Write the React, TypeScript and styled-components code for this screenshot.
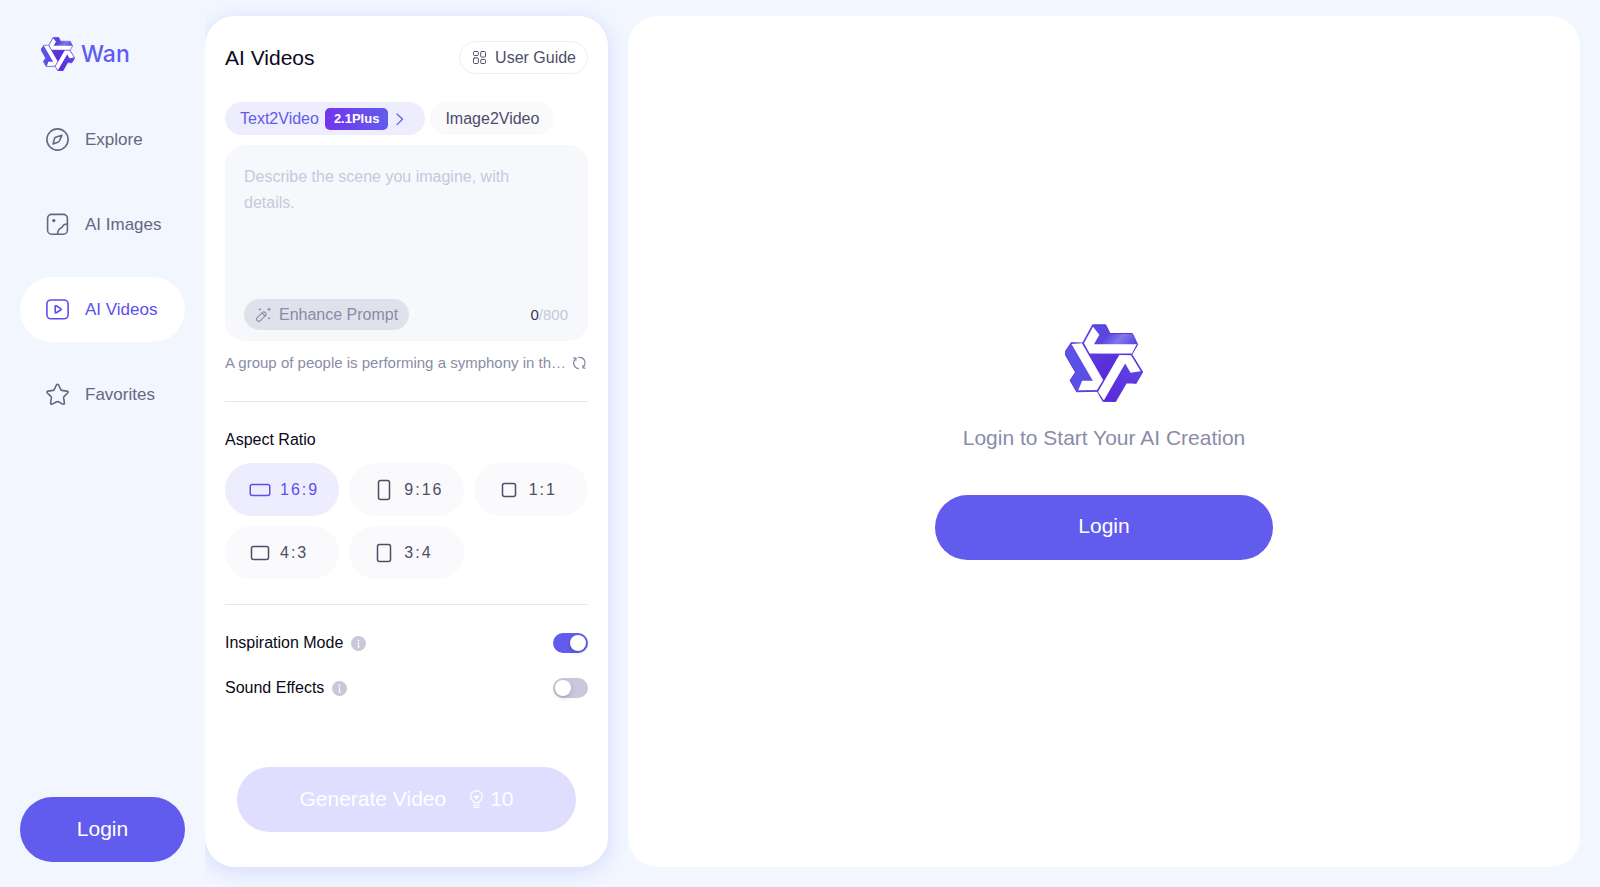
import React, { useState } from 'react';
import styled, { createGlobalStyle, css } from 'styled-components';

const color = {
  page: '#f1f6ff',
  brand: '#615ced',
  brandText: '#5b4ff0',
  brandSoft: '#eeedfe',
  brandDisabled: '#e0deff',
  ink: '#0b0820',
  text: '#4c4d68',
  nav: '#656682',
  muted: '#8a8ca8',
  faint: '#c8c8da',
  line: '#e6e6f2',
  field: '#f7f8fc',
  chip: '#fafafc',
};

const GlobalStyle = createGlobalStyle`
  *, *::before, *::after { box-sizing: border-box; }
  body {
    margin: 0;
    background: ${color.page};
    font-family: "Liberation Sans", Arial, sans-serif;
    color: ${color.ink};
  }
  button, textarea { font-family: inherit; }
`;

const Page = styled.div`
  display: flex;
  min-height: 100vh;
`;

const Sidebar = styled.aside`
  position: relative;
  z-index: 1;
  display: flex;
  flex-direction: column;
  flex: 0 0 205px;
  padding: 37px 20px 25px;
  background: ${color.page};
`;

const Brand = styled.a`
  display: flex;
  align-items: center;
  gap: 6px;
  height: 34px;
  padding-left: 21px;
  color: ${color.brand};
  font: 500 23px/34px Inter, sans-serif;
  text-decoration: none;
`;

const Nav = styled.nav`
  display: flex;
  flex-direction: column;
  gap: 20px;
  margin-top: 36px;
`;

const NavLink = styled.a<{ $active?: boolean }>`
  display: flex;
  align-items: center;
  gap: 16px;
  height: 65px;
  padding-left: 26px;
  border-radius: 33px;
  background: ${(p) => (p.$active ? '#fff' : 'transparent')};
  color: ${(p) => (p.$active ? color.brandText : color.nav)};
  font-size: 17px;
  text-decoration: none;
`;

const PrimaryButton = styled.button<{ $width?: string }>`
  display: flex;
  align-items: center;
  justify-content: center;
  width: ${(p) => p.$width ?? 'auto'};
  height: 65px;
  padding: 0 0 2px;
  border: 0;
  border-radius: 33px;
  background: ${color.brand};
  color: #fff;
  font-size: 21px;
  cursor: pointer;

  &:disabled {
    background: ${color.brandDisabled};
    cursor: default;
  }
`;

const SidebarFooter = styled.div`
  display: grid;
  margin-top: auto;
`;

const Content = styled.div`
  display: flex;
  flex: 1;
  gap: 20px;
  min-width: 0;
  padding: 16px 20px 20px 0;
`;

const Panel = styled.section`
  display: flex;
  flex-direction: column;
  flex: 0 0 403px;
  min-width: 0;
  padding: 25px 20px 35px;
  border-radius: 30px;
  background: #fff;
  box-shadow: 0 4px 20px rgba(97, 92, 237, 0.18);
`;

const PanelHeader = styled.header`
  display: flex;
  align-items: center;
  justify-content: space-between;
`;

const Title = styled.h1`
  margin: 0;
  font-size: 21px;
  font-weight: 400;
`;

const GuideLink = styled.a`
  display: flex;
  align-items: center;
  gap: 9px;
  height: 33px;
  padding: 0 11px 0 13px;
  border: 1px solid #ededf5;
  border-radius: 17px;
  color: ${color.text};
  font-size: 16px;
  text-decoration: none;
`;

const Tabs = styled.div`
  display: flex;
  gap: 5px;
  margin-top: 28px;
`;

const Tab = styled.button<{ $active?: boolean }>`
  display: flex;
  align-items: center;
  gap: 6px;
  height: 33px;
  padding: 0 15px;
  border: 0;
  border-radius: 17px;
  background: ${(p) => (p.$active ? color.brandSoft : color.chip)};
  color: ${(p) => (p.$active ? color.brand : color.text)};
  font-size: 16px;
  cursor: pointer;
`;

const VersionBadge = styled.span`
  height: 22px;
  padding: 0 9px;
  border-radius: 5px;
  background: linear-gradient(90deg, #7434ee, #615ced);
  color: #fff;
  font-size: 13px;
  font-weight: 700;
  line-height: 22px;
`;

const PromptBox = styled.div`
  display: flex;
  flex-direction: column;
  height: 196px;
  margin-top: 10px;
  padding: 19px 20px 11px 19px;
  border-radius: 20px;
  background: ${color.field};
`;

const PromptInput = styled.textarea`
  flex: 1;
  width: 100%;
  min-height: 0;
  padding: 0 20px 0 0;
  border: 0;
  outline: 0;
  resize: none;
  background: transparent;
  color: ${color.text};
  font-size: 16px;
  line-height: 26px;

  &::placeholder { color: ${color.faint}; opacity: 1; }
`;

const PromptFooter = styled.div`
  display: flex;
  align-items: center;
  justify-content: space-between;
`;

const EnhanceButton = styled.button`
  display: flex;
  align-items: center;
  gap: 7px;
  height: 31px;
  padding: 0 11px 0 12px;
  border: 0;
  border-radius: 16px;
  background: #dfe1eb;
  color: ${color.muted};
  font-size: 16px;
`;

const Counter = styled.span`
  color: ${color.faint};
  font-size: 15px;
`;

const CounterValue = styled.span`
  color: #35365a;
`;

const Suggestion = styled.div`
  display: flex;
  align-items: center;
  gap: 5px;
  margin-top: 12px;
  color: ${color.muted};
  font-size: 15px;
  line-height: 20px;
`;

const SuggestionText = styled.span`
  flex: 1;
  min-width: 0;
  overflow: hidden;
  text-overflow: ellipsis;
  white-space: nowrap;
`;

const IconButton = styled.button`
  display: flex;
  padding: 0;
  border: 0;
  background: none;
  color: inherit;
  cursor: pointer;
`;

const Divider = styled.hr<{ $space: number }>`
  width: 100%;
  height: 1px;
  margin: ${(p) => p.$space}px 0 28px;
  border: 0;
  background: ${color.line};
`;

const RatioGroup = styled.fieldset`
  min-width: 0;
  margin: 0;
  padding: 0;
  border: 0;
`;

const Legend = styled.legend`
  padding: 0;
  font-size: 16px;
  line-height: 20px;
`;

const RatioGrid = styled.div`
  display: grid;
  grid-template-columns: repeat(3, 1fr);
  gap: 10px;
  margin-top: 13px;
`;

const HiddenRadio = styled.input`
  position: absolute;
  opacity: 0;
  pointer-events: none;
`;

const RatioOption = styled.label<{ $active: boolean }>`
  display: flex;
  align-items: center;
  gap: 9px;
  height: 53px;
  padding-left: 24px;
  border-radius: 27px;
  background: ${(p) => (p.$active ? color.brandSoft : color.chip)};
  color: ${(p) => (p.$active ? color.brandText : color.text)};
  font-size: 16px;
  letter-spacing: 2px;
  cursor: pointer;
`;

const Settings = styled.div`
  display: grid;
  gap: 25px;
  margin-bottom: 20px;
`;

const SettingRow = styled.div`
  display: flex;
  align-items: center;
  height: 20px;
  font-size: 16px;
`;

const Info = styled.span`
  display: flex;
  margin: 0 auto 0 8px;
`;

const Switch = styled.input`
  appearance: none;
  display: flex;
  align-items: center;
  width: 35px;
  height: 20px;
  margin: 0;
  padding: 2px;
  border-radius: 10px;
  background: ${color.faint};
  cursor: pointer;

  &::before {
    content: '';
    width: 16px;
    height: 16px;
    border-radius: 50%;
    background: #fff;
    box-shadow: 0 2px 4px rgba(0, 35, 11, 0.2);
  }

  &:checked {
    justify-content: flex-end;
    background: ${color.brand};
  }
`;

const GenerateArea = styled.div`
  display: grid;
  margin-top: auto;
  padding: 0 12px;
`;

const Cost = styled.span`
  display: flex;
  align-items: center;
  gap: 6px;
  margin-left: 23px;
`;

const Workspace = styled.main`
  display: flex;
  flex: 1;
  flex-direction: column;
  align-items: center;
  justify-content: center;
  min-width: 0;
  border-radius: 30px;
  background: #fff;
`;

const Invitation = styled.p`
  margin: 23px 0 44px;
  color: ${color.muted};
  font-size: 21px;
  line-height: 26px;
`;

const iconBase = css`
  flex: none;
  fill: none;
  stroke: currentColor;
  stroke-linecap: round;
  stroke-linejoin: round;
`;

const Icon = styled.svg<{ $stroke?: number }>`
  ${iconBase}
  stroke-width: ${(p) => p.$stroke ?? 1.5};
`;

function Logo({ size, id }: { size: number; id: string }) {
  const arms = [
    { angle: 0, fill: `url(#${id}-top)` },
    { angle: 120, fill: `url(#${id}-right)` },
    { angle: 240, fill: `url(#${id}-left)` },
  ];
  return (
    <svg width={size} height={size} viewBox="0 0 234 233" aria-hidden="true">
      <defs>
        <linearGradient id={`${id}-top`} x1="0" y1="0" x2="1" y2="0.5">
          <stop offset="0.2" stopColor="#5a4be4" />
          <stop offset="0.5" stopColor="#5846dd" />
          <stop offset="0.74" stopColor="#8178ec" />
          <stop offset="1" stopColor="#5d49e4" />
        </linearGradient>
        <linearGradient id={`${id}-right`} x1="0" y1="0" x2="1" y2="0">
          <stop offset="0" stopColor="#5f48e4" />
          <stop offset="1" stopColor="#5a28da" />
        </linearGradient>
        <linearGradient id={`${id}-left`} x1="0" y1="1" x2="1" y2="0">
          <stop offset="0" stopColor="#5a48e2" />
          <stop offset="1" stopColor="#5c58e8" />
        </linearGradient>
        <linearGradient id={`${id}-core`} x1="0" y1="0" x2="0.6" y2="1">
          <stop offset="0" stopColor="#5a3fdc" />
          <stop offset="1" stopColor="#5a22d6" />
        </linearGradient>
      </defs>
      <path d="M70 86H170L115 180Z" fill={`url(#${id}-core)`} />
      {arms.map((arm) => (
        <path
          key={arm.angle}
          transform={`rotate(${arm.angle} 117 116)`}
          d="M53 57 83 2H122L135 28H202L218 61 201 90H73Z"
          fill={arm.fill}
          stroke="#5a35df"
          strokeWidth="3"
          strokeLinejoin="round"
        />
      ))}
      {arms.map((arm) => (
        <path
          key={arm.angle}
          transform={`rotate(${arm.angle} 117 116)`}
          d="M57 57 84 8 103 32 87 60H215L201 88H74Z"
          fill="#fff"
        />
      ))}
    </svg>
  );
}

const CompassIcon = () => (
  <Icon width="23" height="23" viewBox="0 0 23 23" $stroke={1.6}>
    <circle cx="11.5" cy="11.5" r="10.6" />
    <path d="M15.9 7.2 9.6 9.2Q8.9 9.5 8.6 10.1L7.1 15.9 12.4 13.9Q13.2 13.5 13.5 12.8Z" />
  </Icon>
);

const ImageIcon = () => (
  <Icon width="23" height="23" viewBox="0 0 23 23" $stroke={1.6}>
    <rect x="1.6" y="1.4" width="19.8" height="19.8" rx="4" />
    <circle cx="7.8" cy="7.6" r="0.9" fill="currentColor" />
    <path d="M11.6 21C11.6 17.4 12.8 15.6 16.2 14.2 16.8 12.2 18.4 11.2 21.2 11" />
  </Icon>
);

const VideoIcon = () => (
  <Icon width="23" height="23" viewBox="0 0 23 23" $stroke={1.6}>
    <rect x="0.9" y="2" width="21.2" height="18.8" rx="4" />
    <path d="M9.2 8.5Q9.2 7.4 10.2 7.8L14.7 10.6Q15.6 11.3 14.7 12L10.2 14.8Q9.2 15.2 9.2 14.2Z" />
  </Icon>
);

const StarIcon = () => (
  <Icon width="23" height="23" viewBox="0 0 23 23" $stroke={1.6}>
    <path d="M10.4 2Q11.5 0.4 12.6 2L14.8 6.6Q15.1 7.3 15.9 7.4L20.9 8.1Q22.8 8.6 21.6 10L18 13.6Q17.5 14.1 17.6 14.9L18.4 19.9Q18.5 21.8 16.8 21.1L12.3 18.7Q11.5 18.3 10.7 18.7L6.2 21.1Q4.5 21.8 4.6 19.9L5.4 14.9Q5.5 14.1 5 13.6L1.4 10Q0.2 8.6 2.1 8.1L7.1 7.4Q7.9 7.3 8.2 6.6Z" />
  </Icon>
);

const GridIcon = () => (
  <Icon width="13" height="13" viewBox="0 0 13 13" $stroke={1}>
    <rect x="0.5" y="0.5" width="4.8" height="4" rx="1" />
    <rect x="7.7" y="0.5" width="4.8" height="5.6" rx="1" />
    <rect x="0.5" y="6.9" width="4.8" height="5.6" rx="1" />
    <rect x="7.7" y="8.5" width="4.8" height="4" rx="1" />
  </Icon>
);

const ChevronIcon = () => (
  <Icon width="16" height="16" viewBox="0 0 16 16" $stroke={1.2}>
    <path d="M3 3 8.6 8.3 3 13.6" />
  </Icon>
);

const WandIcon = () => (
  <Icon width="16" height="16" viewBox="0 0 16 16" $stroke={1.1}>
    <rect x="-0.4" y="7.4" width="11.4" height="4.4" rx="2.2" transform="rotate(-45 5.3 9.6)" />
    <path d="M6.4 6.4 9 9" />
    <g fill="currentColor" stroke="none">
      <path d="M13 0 13.6 1.8 15.4 2.4 13.6 3 13 4.8 12.4 3 10.6 2.4 12.4 1.8Z" />
      <path d="M4 0.6 4.5 1.9 5.8 2.4 4.5 2.9 4 4.2 3.5 2.9 2.2 2.4 3.5 1.9Z" />
      <path d="M13 9.4 13.4 10.7 14.8 11.2 13.4 11.7 13 13 12.6 11.7 11.2 11.2 12.6 10.7Z" />
    </g>
  </Icon>
);

const RefreshIcon = () => (
  <Icon width="16" height="14" viewBox="0 0 16 14" $stroke={1.2}>
    <path d="M1.6 1.9 4 2.1 3.9 4.3" />
    <path d="M3.9 2.4Q1 5 1.7 8.2 2.8 11.8 6.4 12.7" />
    <path d="M6.4 1.5Q10.8 0.9 12.5 4.4 13.8 8.4 11.1 11.4" />
    <path d="M10.9 9.4 10.8 11.8 13.1 12.2" />
  </Icon>
);

const InfoIcon = () => (
  <svg width="15" height="15" viewBox="0 0 15 15" aria-hidden="true">
    <circle cx="7.5" cy="7.5" r="7.5" fill={color.faint} />
    <circle cx="7.5" cy="4.5" r="0.9" fill="#fff" />
    <path d="M6.5 6.7H7.6V11M6.3 11H8.8" fill="none" stroke="#fff" strokeWidth="1" />
  </svg>
);

const BulbIcon = () => (
  <Icon width="15" height="18" viewBox="0 0 15 18" $stroke={1.2}>
    <path d="M5 12.6V12.2Q5 11.7 4.3 11.2A5.8 5.8 0 1 1 10.7 11.2Q10 11.7 10 12.2V12.6Z" />
    <path d="M4.6 15H10.4M4.8 17.2H10.2" />
    <path d="M5.2 6.2Q7.2 6.8 7.5 9.2 7.8 6.8 9.8 6.2 8.2 6.8 7.5 6.2 6.8 6.8 5.2 6.2Z" fill="currentColor" />
  </Icon>
);

const RatioIcon = ({ width, height }: { width: number; height: number }) => (
  <Icon width="22" height="22" viewBox="0 0 22 22">
    <rect x={11 - width / 2} y={11 - height / 2} width={width} height={height} rx="2" />
  </Icon>
);

const navItems = [
  { label: 'Explore', icon: <CompassIcon /> },
  { label: 'AI Images', icon: <ImageIcon /> },
  { label: 'AI Videos', icon: <VideoIcon />, active: true },
  { label: 'Favorites', icon: <StarIcon /> },
];

const ratios = [
  { label: '16:9', width: 19.5, height: 11 },
  { label: '9:16', width: 11, height: 19 },
  { label: '1:1', width: 13, height: 13 },
  { label: '4:3', width: 17, height: 13 },
  { label: '3:4', width: 13, height: 17 },
];

function Setting({ id, label, initial }: { id: string; label: string; initial: boolean }) {
  const [on, setOn] = useState(initial);
  return (
    <SettingRow>
      <label htmlFor={id}>{label}</label>
      <Info>
        <InfoIcon />
      </Info>
      <Switch id={id} type="checkbox" role="switch" checked={on} onChange={() => setOn(!on)} />
    </SettingRow>
  );
}

export default function App() {
  const [prompt, setPrompt] = useState('');
  const [ratio, setRatio] = useState('16:9');

  return (
    <>
      <GlobalStyle />
      <Page>
        <Sidebar>
          <Brand href="#home">
            <Logo size={34} id="brand" />
            Wan
          </Brand>
          <Nav>
            {navItems.map((item) => (
              <NavLink key={item.label} href="#nav" $active={item.active}>
                {item.icon}
                {item.label}
              </NavLink>
            ))}
          </Nav>
          <SidebarFooter>
            <PrimaryButton type="button">Login</PrimaryButton>
          </SidebarFooter>
        </Sidebar>

        <Content>
          <Panel>
            <PanelHeader>
              <Title>AI Videos</Title>
              <GuideLink href="#guide">
                <GridIcon />
                User Guide
              </GuideLink>
            </PanelHeader>

            <Tabs>
              <Tab type="button" $active>
                Text2Video
                <VersionBadge>2.1Plus</VersionBadge>
                <ChevronIcon />
              </Tab>
              <Tab type="button">Image2Video</Tab>
            </Tabs>

            <PromptBox>
              <PromptInput
                aria-label="Prompt"
                placeholder="Describe the scene you imagine, with details."
                maxLength={800}
                value={prompt}
                onChange={(e) => setPrompt(e.target.value)}
              />
              <PromptFooter>
                <EnhanceButton type="button" disabled={!prompt}>
                  <WandIcon />
                  Enhance Prompt
                </EnhanceButton>
                <Counter>
                  <CounterValue>{prompt.length}</CounterValue>/800
                </Counter>
              </PromptFooter>
            </PromptBox>

            <Suggestion>
              <SuggestionText>A group of people is performing a symphony in the concert hall</SuggestionText>
              <IconButton type="button" aria-label="Another suggestion">
                <RefreshIcon />
              </IconButton>
            </Suggestion>

            <Divider $space={28} />

            <RatioGroup>
              <Legend>Aspect Ratio</Legend>
              <RatioGrid>
                {ratios.map((r) => (
                  <RatioOption key={r.label} $active={ratio === r.label}>
                    <HiddenRadio
                      type="radio"
                      name="ratio"
                      value={r.label}
                      checked={ratio === r.label}
                      onChange={() => setRatio(r.label)}
                    />
                    <RatioIcon width={r.width} height={r.height} />
                    {r.label}
                  </RatioOption>
                ))}
              </RatioGrid>
            </RatioGroup>

            <Divider $space={25} />

            <Settings>
              <Setting id="inspiration" label="Inspiration Mode" initial />
              <Setting id="sound" label="Sound Effects" initial={false} />
            </Settings>

            <GenerateArea>
              <PrimaryButton type="button" disabled={!prompt}>
                Generate Video
                <Cost>
                  <BulbIcon />
                  10
                </Cost>
              </PrimaryButton>
            </GenerateArea>
          </Panel>

          <Workspace>
            <Logo size={78} id="hero" />
            <Invitation>Login to Start Your AI Creation</Invitation>
            <PrimaryButton type="button" $width="338px">
              Login
            </PrimaryButton>
          </Workspace>
        </Content>
      </Page>
    </>
  );
}
